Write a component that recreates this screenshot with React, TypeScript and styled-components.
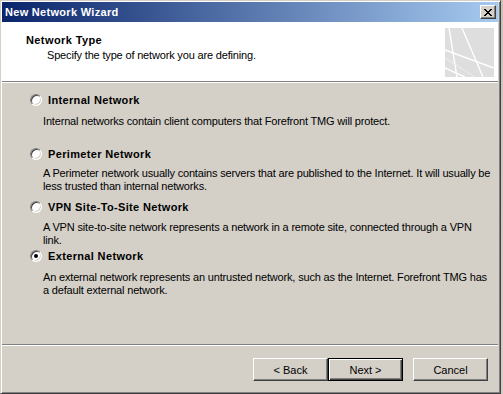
import React from "react";
import styled, { createGlobalStyle } from "styled-components";

const Global = createGlobalStyle`
  html, body { margin: 0; padding: 0; }
  body {
    width: 503px; height: 394px; overflow: hidden;
    background: #d4d0c8;
    font-family: "Liberation Sans", Arial, sans-serif;
    font-size: 11px;
    color: #000;
  }
`;

const Screen = styled.div`
  display: flex;
  width: 503px;
  height: 394px;
`;

const Window = styled.div`
  width: 501px;
  height: 394px;
  box-sizing: border-box;
  background: #d4d0c8;
  border-top: 1px solid #d4d0c8;
  border-left: 1px solid #d4d0c8;
  border-right: 1px solid #404040;
  border-bottom: 1px solid #404040;
  box-shadow: inset 1px 1px 0 #ffffff, inset -1px -1px 0 #808080;
  padding: 1px 2px 2px 1px;
  display: flex;
  flex-direction: column;
`;

const Beyond = styled.div`
  flex: 1;
  background: linear-gradient(#c8c4bc, #d4d0c8);
`;

const TitleBar = styled.div`
  height: 20px;
  background: linear-gradient(to right, #0a246a, #a6caf0);
  display: flex;
  align-items: center;
  justify-content: space-between;
  padding: 0 2px 0 3px;
`;

const Title = styled.span`
  color: #fff;
  font-weight: bold;
  font-size: 11px;
  letter-spacing: 0.3px;
`;

const CloseButton = styled.div`
  width: 16px;
  height: 14px;
  box-sizing: border-box;
  background: #d4d0c8;
  border: 1px solid;
  border-color: #fff #404040 #404040 #fff;
  box-shadow: inset -1px -1px 0 #808080;
  display: flex;
  align-items: center;
  justify-content: center;
`;

const Header = styled.div`
  height: 59px;
  background: #fff;
  display: flex;
  justify-content: space-between;
  padding: 0 4px 0 24px;
  border-bottom: 1px solid #808080;
  box-shadow: 0 1px 0 #fff;
`;

const HeaderText = styled.div`
  display: flex;
  flex-direction: column;
  padding-top: 11px;
`;

const HeaderTitle = styled.div`
  font-weight: bold;
  line-height: 14px;
  letter-spacing: 0.4px;
`;

const HeaderSub = styled.div`
  line-height: 14px;
  padding-left: 21px;
  margin-top: 1px;
  letter-spacing: -0.17px;
`;

const HeaderArt = styled.svg`
  margin-top: 6px;
  width: 49px;
  height: 49px;
`;

const Body = styled.div`
  flex: 1;
  margin-top: 1px;
  padding: 10px 0 0 28px;
  display: flex;
  flex-direction: column;
`;

const Option = styled.div<{ $mt: number }>`
  margin-top: ${(p) => p.$mt}px;
  display: flex;
  flex-direction: column;
`;

const RadioRow = styled.div`
  height: 14px;
  display: flex;
  align-items: center;
  gap: 6px;
`;

const Radio = styled.span<{ $checked?: boolean }>`
  width: 12px;
  height: 12px;
  box-sizing: border-box;
  border-radius: 50%;
  border: 1px solid;
  border-color: #808080 #ffffff #ffffff #808080;
  background: #fff;
  box-shadow: inset 1px 1px 0 #404040, inset -1px -1px 0 #d4d0c8;
  display: flex;
  align-items: center;
  justify-content: center;
  &::after {
    content: "";
    display: ${(p) => (p.$checked ? "block" : "none")};
    width: 4px;
    height: 4px;
    border-radius: 50%;
    background: #000;
  }
`;

const Label = styled.span`
  font-weight: bold;
  line-height: 14px;
  letter-spacing: 0.35px;
`;

const Desc = styled.div<{ $mt: number }>`
  margin-top: ${(p) => p.$mt}px;
  padding-left: 13px;
  width: 450px;
  line-height: 13px;
  min-height: 26px;
  letter-spacing: -0.17px;
`;

const Footer = styled.div`
  border-top: 1px solid #808080;
  box-shadow: inset 0 1px 0 #fff;
  height: 46px;
  display: flex;
  align-items: flex-start;
  padding: 13px 0 0 251px;
  box-sizing: border-box;
  margin-bottom: 1px;
`;

const Button = styled.button<{ $default?: boolean; $ml?: number }>`
  width: 75px;
  height: 23px;
  margin-left: ${(p) => p.$ml ?? 0}px;
  box-sizing: border-box;
  font-family: "Liberation Sans", Arial, sans-serif;
  font-size: 11px;
  color: #000;
  background: #d4d0c8;
  padding: 0;
  border: 1px solid;
  border-color: ${(p) => (p.$default ? "#000" : "#fff #404040 #404040 #fff")};
  box-shadow: ${(p) =>
    p.$default
      ? "inset 1px 1px 0 #fff, inset -1px -1px 0 #404040, inset -2px -2px 0 #808080"
      : "inset -1px -1px 0 #808080"};
`;

const options = [
  {
    label: "Internal Network",
    desc: "Internal networks contain client computers that Forefront TMG will protect.",
    mt: 0,
    dmt: 8,
  },
  {
    label: "Perimeter Network",
    desc: "A Perimeter network usually contains servers that are published to the Internet. It will usually be less trusted than internal networks.",
    mt: 6,
    dmt: 6,
  },
  {
    label: "VPN Site-To-Site Network",
    desc: "A VPN site-to-site network represents a network in a remote site, connected through a VPN link.",
    mt: 7,
    dmt: 7,
  },
  {
    label: "External Network",
    desc: "An external network represents an untrusted network, such as the Internet. Forefront TMG has a default external network.",
    mt: 2,
    dmt: 8,
    checked: true,
  },
];

export default function App() {
  return (
    <Screen>
      <Global />
      <Window>
        <TitleBar>
          <Title>New Network Wizard</Title>
          <CloseButton>
            <svg width="8" height="7" viewBox="0 0 8 7">
              <path d="M0 0L7 7M1 0L8 7M7 0L0 7M8 0L1 7" stroke="#000" strokeWidth="1" />
            </svg>
          </CloseButton>
        </TitleBar>
        <Header>
          <HeaderText>
            <HeaderTitle>Network Type</HeaderTitle>
            <HeaderSub>Specify the type of network you are defining.</HeaderSub>
          </HeaderText>
          <HeaderArt viewBox="0 0 49 49">
            <rect width="49" height="49" fill="#dedede" />
            <g stroke="#ffffff" strokeWidth="1.4" fill="none">
              <line x1="4" y1="0" x2="12" y2="49" />
              <line x1="17" y1="0" x2="38" y2="49" />
              <line x1="0" y1="22" x2="49" y2="40" />
              <line x1="0" y1="40" x2="20" y2="49" />
            </g>
            <g stroke="#efefef" strokeWidth="1" fill="none">
              <line x1="0" y1="30" x2="30" y2="49" />
            </g>
          </HeaderArt>
        </Header>
        <Body>
          {options.map((o) => (
            <Option key={o.label} $mt={o.mt}>
              <RadioRow>
                <Radio $checked={o.checked} />
                <Label>{o.label}</Label>
              </RadioRow>
              <Desc $mt={o.dmt}>{o.desc}</Desc>
            </Option>
          ))}
        </Body>
        <Footer>
          <Button>&lt; Back</Button>
          <Button $default>Next &gt;</Button>
          <Button $ml={10}>Cancel</Button>
        </Footer>
      </Window>
      <Beyond />
    </Screen>
  );
}
